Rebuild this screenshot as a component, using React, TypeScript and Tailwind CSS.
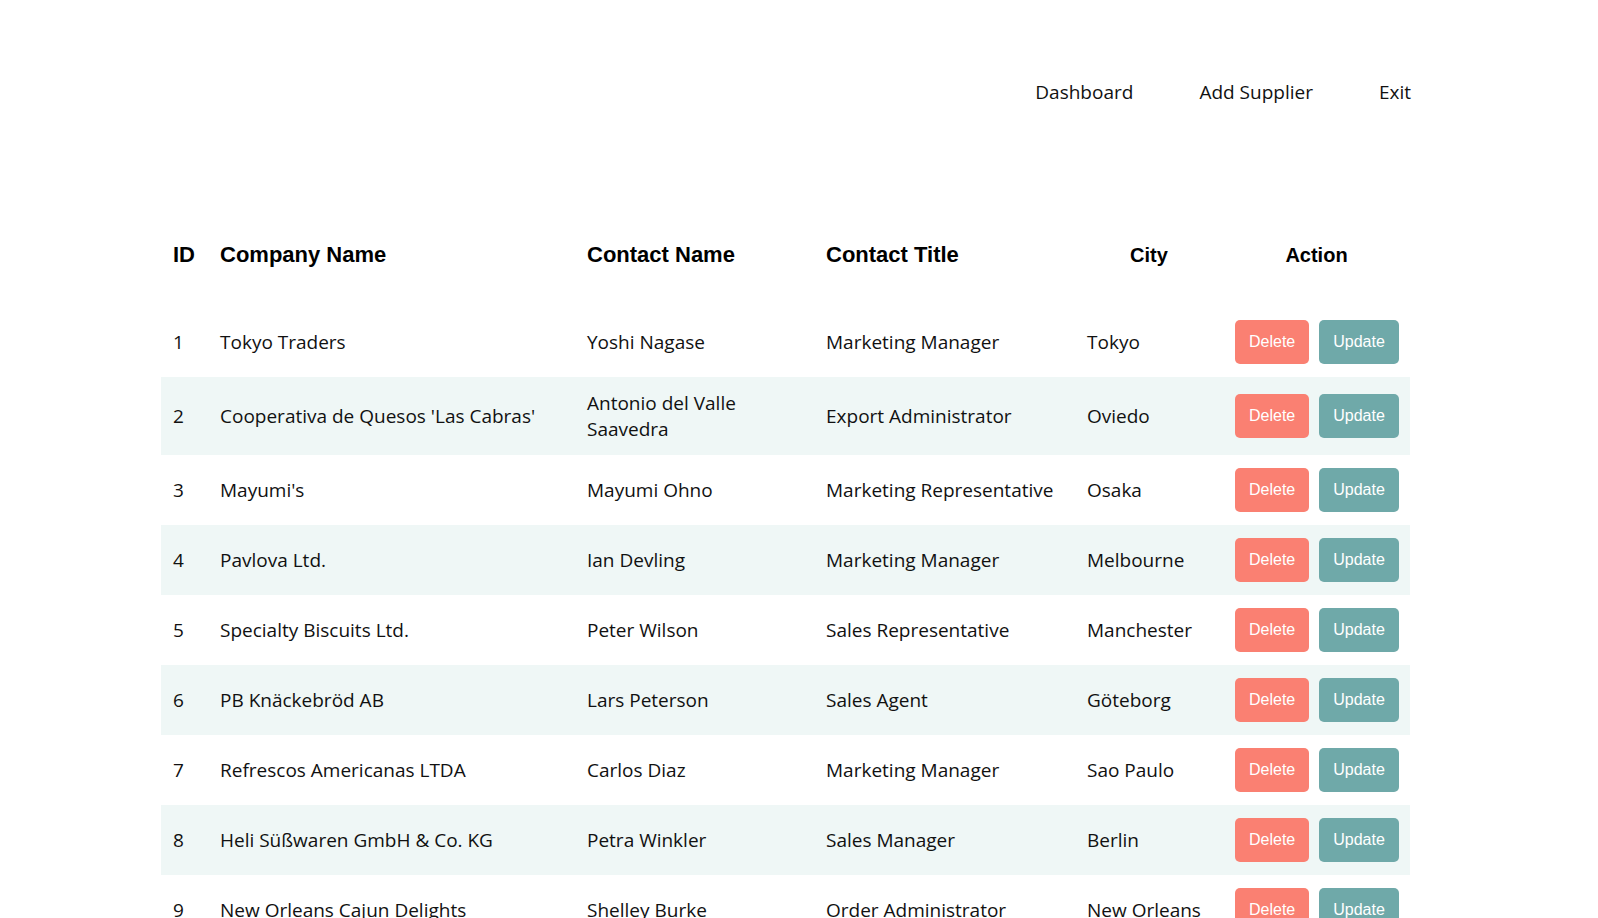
import React from "react";

type Supplier = {
  id: number;
  company: string;
  contact: string;
  title: string;
  city: string;
};

const suppliers: Supplier[] = [
  { id: 1, company: "Tokyo Traders", contact: "Yoshi Nagase", title: "Marketing Manager", city: "Tokyo" },
  { id: 2, company: "Cooperativa de Quesos 'Las Cabras'", contact: "Antonio del Valle Saavedra", title: "Export Administrator", city: "Oviedo" },
  { id: 3, company: "Mayumi's", contact: "Mayumi Ohno", title: "Marketing Representative", city: "Osaka" },
  { id: 4, company: "Pavlova Ltd.", contact: "Ian Devling", title: "Marketing Manager", city: "Melbourne" },
  { id: 5, company: "Specialty Biscuits Ltd.", contact: "Peter Wilson", title: "Sales Representative", city: "Manchester" },
  { id: 6, company: "PB Knäckebröd AB", contact: "Lars Peterson", title: "Sales Agent", city: "Göteborg" },
  { id: 7, company: "Refrescos Americanas LTDA", contact: "Carlos Diaz", title: "Marketing Manager", city: "Sao Paulo" },
  { id: 8, company: "Heli Süßwaren GmbH & Co. KG", contact: "Petra Winkler", title: "Sales Manager", city: "Berlin" },
  { id: 9, company: "New Orleans Cajun Delights", contact: "Shelley Burke", title: "Order Administrator", city: "New Orleans" },
];

const cols = "grid grid-cols-[47px_367px_239px_261px_148px_187px]";

export default function App() {
  return (
    <div className="min-h-screen bg-white text-[#111] font-['Open_Sans',sans-serif]">
      <nav className="flex justify-end pr-[187px] pt-[77px] text-[19px] leading-[30px]">
        <a className="px-[33px]">Dashboard</a>
        <a className="px-[33px]">Add Supplier</a>
        <a className="pl-[33px]">Exit</a>
      </nav>

      <div className="ml-[161px] mt-[128px] w-[1249px]">
        {/* header row: first four left, City/Action centred and a bit smaller */}
        <div className={`${cols} h-[72px] items-start font-['Liberation_Sans',Arial,sans-serif] font-bold text-black`}>
          <div className="px-3 pt-[7px] text-[22px] leading-[25px]">ID</div>
          <div className="px-3 pt-[7px] text-[22px] leading-[25px]">Company Name</div>
          <div className="px-3 pt-[7px] text-[22px] leading-[25px]">Contact Name</div>
          <div className="px-3 pt-[7px] text-[22px] leading-[25px]">Contact Title</div>
          <div className="px-3 pt-[9px] text-center text-[20px] leading-[23px]">City</div>
          <div className="px-3 pt-[9px] text-center text-[20px] leading-[23px]">Action</div>
        </div>

        {suppliers.map((s, i) => (
          <div
            key={s.id}
            className={`${cols} items-center py-[13px] text-[19px] leading-[26px] ${i % 2 === 1 ? "bg-[#eff7f6]" : ""}`}
          >
            <div className="px-3">{s.id}</div>
            <div className="px-3">{s.company}</div>
            <div className="px-3">{s.contact}</div>
            <div className="px-3">{s.title}</div>
            <div className="px-3">{s.city}</div>
            <div className="flex gap-[10px] px-3 font-['Liberation_Sans',Arial,sans-serif] text-[16px]">
              <button className="h-[44px] rounded-[5px] bg-[#fa8072] px-[14px] text-white">Delete</button>
              <button className="h-[44px] rounded-[5px] bg-[#6fa9a9] px-[14px] text-white">Update</button>
            </div>
          </div>
        ))}
      </div>
    </div>
  );
}
